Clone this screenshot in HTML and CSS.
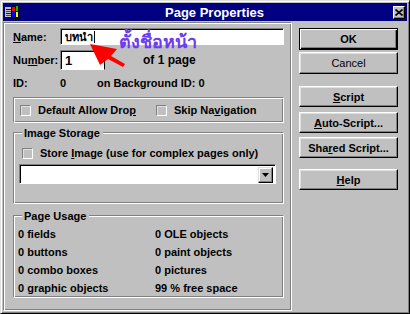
FILE: index.html
```html
<!DOCTYPE html>
<html lang="en">
<head>
  <meta charset="UTF-8">
  <title>Page Properties</title>
  <link rel="stylesheet" href="styles.css">
</head>
<body>
  <div class="window">
    <div class="titlebar">
      <svg class="app-icon" viewBox="0 0 14 14">
        <rect x="0" y="2" width="6" height="10" fill="#c0c0c0"/>
        <rect x="1" y="4" width="5" height="1" fill="#0000ff"/>
        <rect x="1" y="6" width="5" height="1" fill="#ff0000"/>
        <rect x="1" y="8" width="5" height="1" fill="#0000ff"/>
        <rect x="1" y="10" width="5" height="1" fill="#ff0000"/>
        <rect x="6" y="0" width="8" height="14" fill="#000"/>
        <rect x="7" y="2" width="3" height="4" fill="#ff0000"/>
        <rect x="11" y="1" width="2" height="5" fill="#00c000"/>
        <rect x="7" y="7" width="3" height="5" fill="#0000ff"/>
        <rect x="11" y="7" width="2" height="5" fill="#ffff00"/>
      </svg>
      <span class="title">Page Properties</span>
      <span class="close-btn">
        <svg viewBox="0 0 8 7" width="8" height="7">
          <path d="M0.5 0.5 L7.5 6.5 M7.5 0.5 L0.5 6.5" stroke="#000" stroke-width="1.6"/>
        </svg>
      </span>
    </div>

    <div class="client">
      <div class="main-panel">
        <div class="row name-row">
          <span class="lbl"><u>N</u>ame:</span>
          <div class="field name-field">บทนำ<span class="caret"></span></div>
        </div>
        <div class="row number-row">
          <span class="lbl">Nu<u>m</u>ber:</span>
          <div class="field number-field">1</div>
          <span class="of-page">of 1 page</span>
        </div>
        <div class="row id-row">
          <span class="lbl">ID:</span>
          <span class="id-val">0</span>
          <span>on Background ID: 0</span>
        </div>

        <div class="group flags">
          <span class="check"><span class="box"></span><span>Default Allow Dro<u>p</u></span></span>
          <span class="check skip"><span class="box"></span><span>Skip Na<u>v</u>igation</span></span>
        </div>

        <div class="group storage">
          <span class="legend">Image Storage</span>
          <span class="check"><span class="box"></span><span>Store <u>I</u>mage (use for complex pages only)</span></span>
          <div class="combo">
            <span class="combo-btn">
              <svg viewBox="0 0 7 4" width="7" height="4"><path d="M0 0 H7 L3.5 4 Z" fill="#000"/></svg>
            </span>
          </div>
        </div>

        <div class="group usage">
          <span class="legend">Page Usage</span>
          <div class="usage-grid">
            <span>0 fields</span><span>0 OLE objects</span>
            <span>0 buttons</span><span>0 paint objects</span>
            <span>0 combo boxes</span><span>0 pictures</span>
            <span>0 graphic objects</span><span>99 % free space</span>
          </div>
        </div>
      </div>

      <div class="side">
        <div class="btn default">OK</div>
        <div class="btn cancel">Cancel</div>
        <div class="btn script"><u>S</u>cript</div>
        <div class="btn auto"><u>A</u>uto-Script...</div>
        <div class="btn shared">Sha<u>r</u>ed Script...</div>
        <div class="btn help"><u>H</u>elp</div>
      </div>
    </div>

    <!-- annotation drawn over the dialog -->
    <span class="note">ตั้งชื่อหน้า</span>
    <svg class="arrow" viewBox="0 0 40 28" width="40" height="28">
      <polygon points="3,3 30,8 24,15 38,23 36,26 21,18 13,24" fill="#ff0000"/>
    </svg>
  </div>
</body>
</html>
```

FILE: styles.css
```css
/* Win95 style dialog */
body {
  margin: 0;
  background: #c0c0c0;
  font-family: "Liberation Sans", Arial, "Noto Sans", sans-serif;
  font-size: 11px;
  font-weight: bold;
  color: #000;
}

.window {
  position: relative;
  width: 410px;
  height: 314px;
  box-sizing: border-box;
  padding: 2px;
  background: #c0c0c0;
  border: 1px solid;
  border-color: #dfdfdf #000 #000 #dfdfdf;
  box-shadow: inset 1px 1px #fff, inset -1px -1px #808080;
  display: flex;
  flex-direction: column;
}

.titlebar {
  flex: none;
  height: 18px;
  background: #000080;
  color: #fff;
  display: flex;
  align-items: center;
}

.app-icon {
  width: 14px;
  height: 14px;
  margin-left: 2px;
}

.title {
  flex: 1;
  text-align: center;
  font-size: 13px;
  padding-left: 17px;
}

.close-btn {
  width: 12px;
  height: 13px;
  margin-right: 2px;
  box-sizing: border-box;
  background: #c0c0c0;
  border: 1px solid;
  border-color: #fff #000 #000 #fff;
  box-shadow: inset -1px -1px #808080;
  display: flex;
  align-items: center;
  justify-content: center;
}

.client {
  flex: 1;
  display: flex;
}

.main-panel {
  width: 289px;
  margin-top: 1px;
  box-sizing: border-box;
  padding: 0 7px 0 9px;
  border: 1px solid;
  border-color: #808080 #fff #fff #808080;
  box-shadow: inset 1px 1px #fff, inset -1px -1px #808080;
}

.row {
  display: flex;
  align-items: center;
}

.lbl {
  width: 47px;
}

.name-row {
  margin-top: 5px;
}

.field {
  box-sizing: border-box;
  background: #fff;
  border: 1px solid;
  border-color: #808080 #fff #fff #808080;
  box-shadow: inset 1px 1px #000;
  padding-left: 4px;
  display: flex;
  align-items: center;
}

.name-field {
  width: 224px;
  height: 17px;
  font-family: "Liberation Sans", "Noto Sans", sans-serif;
}

.caret {
  width: 1px;
  height: 12px;
  background: #000;
  margin-left: 1px;
}

.number-row {
  margin-top: 5px;
}

.number-field {
  width: 45px;
  height: 20px;
  font-size: 13px;
  border-right-color: #000;
}

.of-page {
  margin-left: 38px;
  font-size: 12px;
}

.id-row {
  margin-top: 6px;
  height: 14px;
}

.id-val {
  width: 37px;
}

.group {
  position: relative;
  box-sizing: border-box;
  border: 1px solid;
  border-color: #808080 #fff #fff #808080;
  box-shadow: inset 1px 1px #fff, inset -1px -1px #808080;
}

.legend {
  position: absolute;
  top: -7px;
  left: 8px;
  padding: 0 3px 0 2px;
  background: #c0c0c0;
  line-height: 14px;
}

.check {
  display: flex;
  align-items: center;
  height: 14px;
}

.box {
  width: 11px;
  height: 11px;
  box-sizing: border-box;
  margin-right: 7px;
  background: #c0c0c0;
  border: 1px solid;
  border-color: #808080 #fff #fff #808080;
  box-shadow: inset 1px 1px #dfdfdf;
}

.flags {
  margin-top: 7px;
  height: 26px;
  display: flex;
  align-items: center;
  padding-left: 6px;
}

.skip {
  margin-left: 20px;
}

.storage {
  margin-top: 9px;
  height: 72px;
  padding: 13px 6px 0 5px;
}

.storage .check {
  margin-left: 3px;
}

.combo {
  margin-top: 4px;
  width: 257px;
  height: 20px;
  box-sizing: border-box;
  background: #fff;
  border: 1px solid;
  border-color: #808080 #fff #fff #808080;
  box-shadow: inset 1px 1px #000;
  display: flex;
  justify-content: flex-end;
  align-items: center;
  padding-right: 2px;
}

.combo-btn {
  width: 15px;
  height: 16px;
  box-sizing: border-box;
  margin-top: 1px;
  background: #c0c0c0;
  border: 1px solid;
  border-color: #dfdfdf #000 #000 #dfdfdf;
  box-shadow: inset -1px -1px #808080, inset 1px 1px #fff;
  display: flex;
  align-items: center;
  justify-content: center;
}

.usage {
  margin-top: 11px;
  height: 83px;
  padding: 11px 0 0 4px;
}

.usage-grid {
  display: grid;
  grid-template-columns: 137px 1fr;
  row-gap: 4px;
  line-height: 14px;
}

.side {
  flex: 1;
  padding: 7px 0 0 7px;
  display: flex;
  flex-direction: column;
}

.btn {
  width: 99px;
  height: 21px;
  box-sizing: border-box;
  border: 1px solid;
  border-color: #fff #000 #000 #fff;
  box-shadow: inset -1px -1px #808080, inset 1px 1px #dfdfdf;
  display: flex;
  align-items: center;
  justify-content: center;
}

.btn.default {
  height: 22px;
  border: 1px solid #000;
  box-shadow: inset 1px 1px #fff, inset -1px -1px #000, inset -2px -2px #808080;
}

.btn.cancel {
  height: 22px;
  margin-top: 2px;
  font-weight: normal;
}

.btn.script {
  margin-top: 12px;
}

.btn.auto {
  margin-top: 5px;
}

.btn.shared {
  margin-top: 4px;
}

.btn.help {
  margin-top: 11px;
}

.note {
  position: absolute;
  left: 118px;
  top: 26px;
  font-family: "Noto Sans", "DejaVu Sans", sans-serif;
  font-size: 18px;
  font-weight: bold;
  color: #6b3cf0;
  white-space: nowrap;
}

.arrow {
  position: absolute;
  left: 86px;
  top: 40px;
}
```
